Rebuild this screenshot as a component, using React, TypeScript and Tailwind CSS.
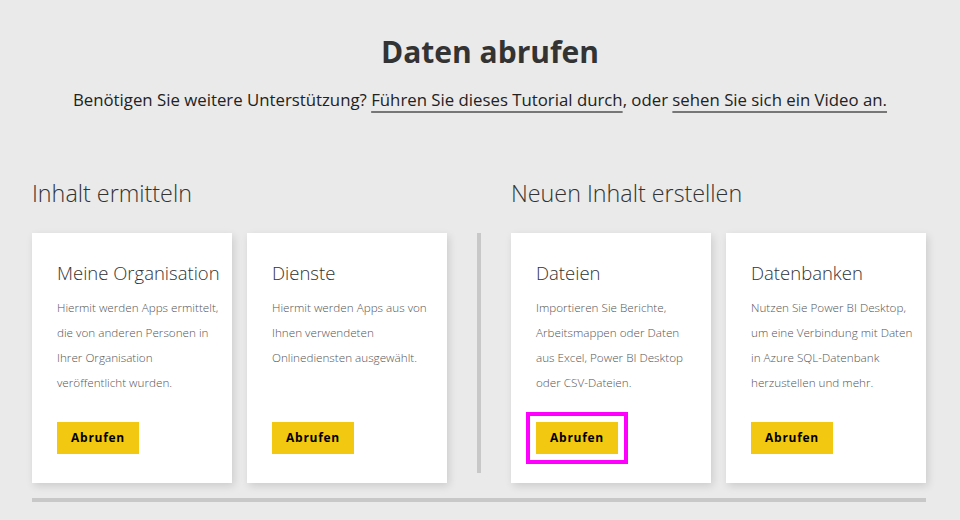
import React from 'react';

const font = { fontFamily: '"Open Sans", "Noto Sans", sans-serif' };

interface Card {
  title: string;
  lines: string[];
  highlight?: boolean;
}

const discover: Card[] = [
  {
    title: 'Meine Organisation',
    lines: ['Hiermit werden Apps ermittelt,', 'die von anderen Personen in', 'Ihrer Organisation', 'veröffentlicht wurden.'],
  },
  {
    title: 'Dienste',
    lines: ['Hiermit werden Apps aus von', 'Ihnen verwendeten', 'Onlinediensten ausgewählt.'],
  },
];

const create: Card[] = [
  {
    title: 'Dateien',
    lines: ['Importieren Sie Berichte,', 'Arbeitsmappen oder Daten', 'aus Excel, Power BI Desktop', 'oder CSV-Dateien.'],
    highlight: true,
  },
  {
    title: 'Datenbanken',
    lines: ['Nutzen Sie Power BI Desktop,', 'um eine Verbindung mit Daten', 'in Azure SQL-Datenbank', 'herzustellen und mehr.'],
  },
];

function SourceCard({ card }: { card: Card }) {
  return (
    <div className="flex h-[250px] w-[200px] flex-col bg-white pl-[25px] pr-2 pt-[28px] pb-[29px] shadow-[2px_3px_8px_rgba(0,0,0,0.13)]">
      <h3 className="whitespace-nowrap text-[18.5px] leading-[24px] font-light text-[#333]">{card.title}</h3>
      <p className="mt-[10px] whitespace-nowrap text-[11.7px] leading-[25px] font-light text-[#555]">
        {card.lines.map((l) => (
          <span key={l} className="block">{l}</span>
        ))}
      </p>
      <div className="mt-auto">
        <button
          className={
            'h-[32px] w-[82px] bg-[#f2c811] text-[12px] font-bold tracking-[0.06em] text-black ' +
            (card.highlight ? 'outline-4 outline-[#ff00ff] outline-offset-[6px]' : '')
          }
        >
          Abrufen
        </button>
      </div>
    </div>
  );
}

function Section({ title, cards }: { title: string; cards: Card[] }) {
  return (
    <div className="flex w-[415px] flex-col">
      <h2 className="text-[23.3px] leading-[32px] font-light text-[#333]">{title}</h2>
      <div className="mt-[24px] flex gap-[15px]">
        {cards.map((c) => (
          <SourceCard key={c.title} card={c} />
        ))}
      </div>
    </div>
  );
}

export default function App() {
  return (
    <main style={font} className="h-[520px] w-[960px] overflow-hidden bg-[#eaeaea] px-[32px]">
      <header className="flex flex-col items-center pt-[32px]">
        <h1 className="ml-[20px] text-[30px] leading-[40px] font-bold text-[#333]">Daten abrufen</h1>
        <p className="mt-[16px] text-[16.8px] leading-[24px] text-[#222]">
          Benötigen Sie weitere Unterstützung?{' '}
          <a className="underline decoration-[#777] decoration-2 underline-offset-[5px]">Führen Sie dieses Tutorial durch</a>
          , oder{' '}
          <a className="underline decoration-[#777] decoration-2 underline-offset-[5px]">sehen Sie sich ein Video an.</a>
        </p>
      </header>

      <div className="mt-[65px] flex gap-[30px]">
        <Section title="Inhalt ermitteln" cards={discover} />
        <div className="mt-[56px] h-[240px] w-[4px] bg-[#c8c8c8]" />
        <Section title="Neuen Inhalt erstellen" cards={create} />
      </div>

      <div className="mt-[15px] h-[4px] w-[894px] bg-[#c8c8c8]" />
    </main>
  );
}
